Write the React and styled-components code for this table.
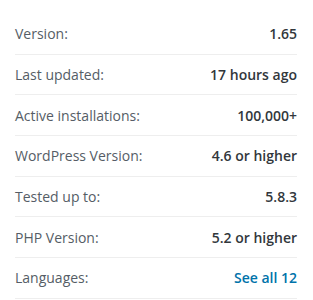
import React from "react";
import styled, { createGlobalStyle } from "styled-components";

const Global = createGlobalStyle`
  html, body { margin: 0; padding: 0; background: #fff; }
  body { font-family: "Open Sans", "Noto Sans", sans-serif; }
`;

const Meta = styled.ul`
  list-style: none;
  margin: 0;
  padding: 14px 16px 0 15px;
  width: 282px;
`;

const Row = styled.li`
  display: flex;
  align-items: center;
  justify-content: space-between;
  height: 40.67px;
  box-sizing: border-box;
  border-bottom: 1px solid #eeeeee;
  font-size: 14px;
  line-height: 21px;
`;

const Label = styled.span`
  color: #555d66;
`;

const Value = styled.strong`
  font-weight: 600;
  color: #32373c;
`;

const Link = styled.a`
  font-weight: 600;
  color: #0073aa;
  text-decoration: none;
`;

const rows = [
  ["Version:", "1.65"],
  ["Last updated:", "17 hours ago"],
  ["Active installations:", "100,000+"],
  ["WordPress Version:", "4.6 or higher"],
  ["Tested up to:", "5.8.3"],
  ["PHP Version:", "5.2 or higher"],
];

export default function App() {
  return (
    <>
      <Global />
      <Meta>
        {rows.map(([label, value]) => (
          <Row key={label}>
            <Label>{label}</Label>
            <Value>{value}</Value>
          </Row>
        ))}
        <Row>
          <Label>Languages:</Label>
          <Link href="#languages">See all 12</Link>
        </Row>
      </Meta>
    </>
  );
}
